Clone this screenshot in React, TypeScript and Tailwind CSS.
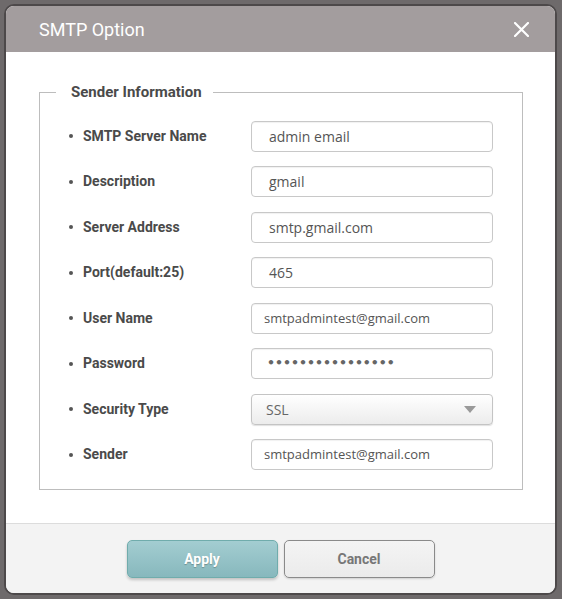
import React from "react";

const fields: { label: string; value: string; kind?: "email" | "password" | "select" }[] = [
  { label: "SMTP Server Name", value: "admin email" },
  { label: "Description", value: "gmail" },
  { label: "Server Address", value: "smtp.gmail.com" },
  { label: "Port(default:25)", value: "465" },
  { label: "User Name", value: "smtpadmintest@gmail.com", kind: "email" },
  { label: "Password", value: "••••••••••••••••", kind: "password" },
  { label: "Security Type", value: "SSL", kind: "select" },
  { label: "Sender", value: "smtpadmintest@gmail.com", kind: "email" },
];

function Field({ value, kind }: { value: string; kind?: string }) {
  if (kind === "select") {
    return (
      <div className="flex h-[31px] w-[242px] items-center justify-between rounded-[4px] border border-[#c4c4c4] bg-gradient-to-b from-white to-[#ececec] pl-[14px] pr-[16px] text-[14px] text-[#666] shadow-[0_1px_1px_rgba(0,0,0,0.12)] [font-family:'Open_Sans',sans-serif]">
        <span>{value}</span>
        <svg width="12" height="7" viewBox="0 0 12 7">
          <path d="M0 0h12L6 7z" fill="#9a9a9a" />
        </svg>
      </div>
    );
  }
  return (
    <div
      className={`flex h-[31px] w-[242px] items-center rounded-[4px] border border-[#c8c8c8] bg-white text-[#555] shadow-[inset_0_1px_1px_rgba(0,0,0,0.06)] ${
        kind === "email"
          ? "pl-[12px] text-[13px] [font-family:'Open_Sans',sans-serif]"
          : kind === "password"
          ? "pl-[15px] text-[12.5px] font-bold text-[#666] [font-family:'DejaVu_Sans',sans-serif]"
          : "pl-[17px] text-[14px] [font-family:'Open_Sans',sans-serif]"
      }`}
    >
      {value}
    </div>
  );
}

export default function App() {
  return (
    <div className="h-[599px] w-[562px] overflow-hidden bg-[#6e6a6b] pl-[4px] pt-[4px] [font-family:Roboto,'Liberation_Sans',sans-serif]">
      <div className="flex h-[591px] w-[553px] flex-col overflow-hidden rounded-[10px] border-2 border-[#4d494a] bg-white">
        {/* header */}
        <div className="flex h-[46px] shrink-0 items-center justify-between bg-[#a39d9e] pl-[33px] pr-[26px]">
          <span className="text-[18px] text-white">SMTP Option</span>
          <svg width="15" height="15" viewBox="0 0 15 15">
            <path d="M1 1l13 13M14 1L1 14" stroke="white" strokeWidth="2.2" strokeLinecap="round" />
          </svg>
        </div>

        {/* body */}
        <div className="flex-1 pl-[33px] pr-[32px] pt-[31px]">
          <fieldset className="border border-[#bdbdbd] pb-[11px] pt-[12.5px]">
            <legend className="ml-[16px] pl-[15px] pr-[11px] text-[15px] font-bold leading-[18px] text-[#4a4a4a]">
              Sender Information
            </legend>
            <div className="flex flex-col">
              {fields.map((f) => (
                <div key={f.label} className="flex h-[45.5px] items-center pl-[29px]">
                  <span className="mr-[10px] h-[4px] w-[4px] rounded-full bg-[#555]" />
                  <span className="w-[168px] text-[14px] font-bold text-[#4a4a4a]">{f.label}</span>
                  <Field value={f.value} kind={f.kind} />
                </div>
              ))}
            </div>
          </fieldset>
        </div>

        {/* footer */}
        <div className="flex h-[70px] shrink-0 items-center justify-center gap-[6px] border-t border-[#dcdcdc] bg-[#f3f3f3] pt-[1px]">
          <button className="h-[38px] w-[151px] rounded-[5px] border border-[#70acac] bg-gradient-to-b from-[#a3cdd1] to-[#87b8bd] text-[14px] font-bold text-white shadow-[0_2px_3px_rgba(0,0,0,0.2)] [text-shadow:0_1px_1px_rgba(0,0,0,0.25)]">
            Apply
          </button>
          <button className="h-[38px] w-[151px] rounded-[5px] border border-[#8a8a8a] bg-gradient-to-b from-[#f4f4f4] to-[#ebebeb] text-[14px] font-bold text-[#777] shadow-[0_1px_2px_rgba(0,0,0,0.15)]">
            Cancel
          </button>
        </div>
      </div>
    </div>
  );
}
